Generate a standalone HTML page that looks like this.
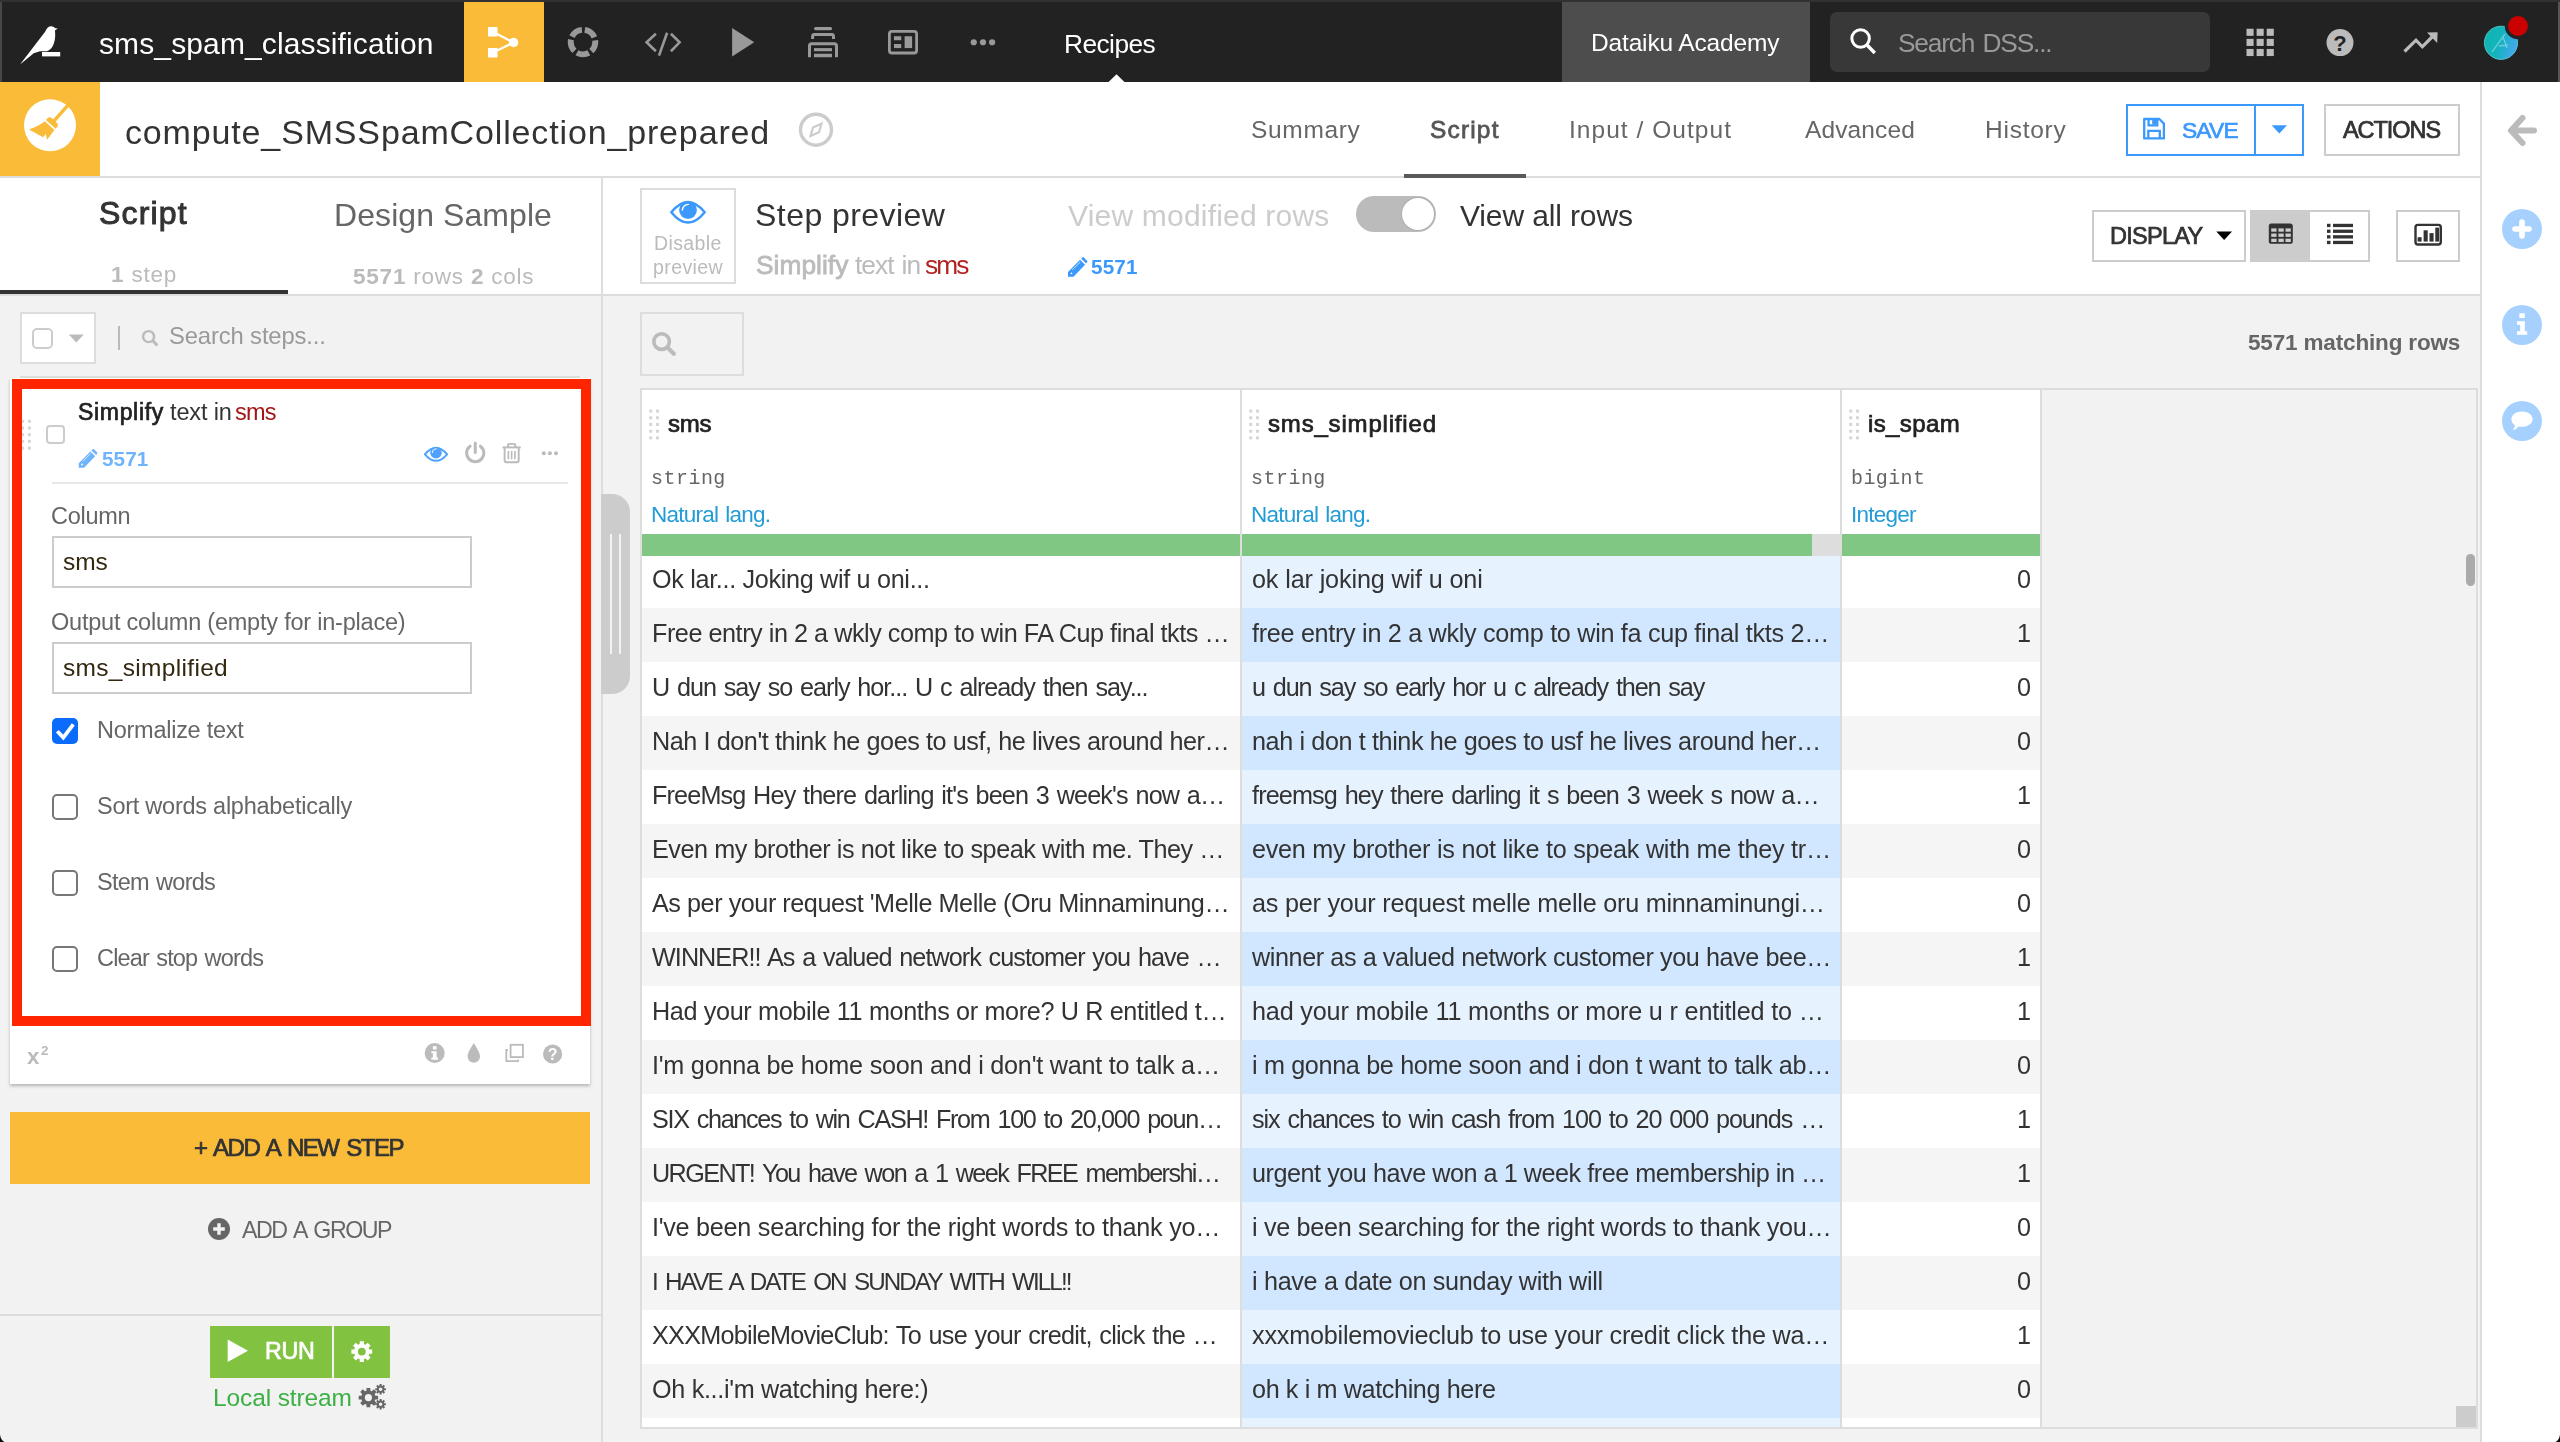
<!DOCTYPE html>
<html lang="en">
<head>
<meta charset="utf-8">
<title>compute_SMSSpamCollection_prepared - sms_spam_classification</title>
<style>
html,body{margin:0;padding:0;}
body{position:relative;width:2560px;height:1442px;overflow:hidden;background:#fff;font-family:"Liberation Sans",sans-serif;}
.b{position:absolute;box-sizing:border-box;}
svg{position:absolute;overflow:visible;}
.t{will-change:transform;position:absolute;white-space:pre;line-height:1;font-family:"Liberation Sans", sans-serif;}.m{font-family:"Liberation Mono", monospace;}
</style>
</head>
<body>

<!-- ===================== TOP NAVIGATION ===================== -->
<nav>
<div class="b" style="left:0;top:0;width:2560px;height:82px;background:#222"></div>
<div class="b" style="left:0;top:0;width:2560px;height:2px;background:#313131"></div>
<div class="b" style="left:0;top:2px;width:2px;height:80px;background:#474747"></div>
<div class="b" style="left:2558px;top:2px;width:2px;height:80px;background:#555"></div>
<div class="b" style="left:464px;top:2px;width:80px;height:80px;background:#f9bb38"></div>
<div class="b" style="left:1562px;top:2px;width:248px;height:80px;background:#4d4d4d"></div>
<div class="b" style="left:1830px;top:12px;width:380px;height:60px;background:#383838;border-radius:7px"></div>
<svg style="left:0;top:0" width="2560" height="1442" viewBox="0 0 2560 1442">

<g fill="#fff"><path d="M57.8 28.4L54.9 30.6C55.6 36 55.2 42 52.5 46.5C51 49 49 50.5 47 51.2L40 51.3 33.7 53.2 20 64.6 45.3 31.5C46.5 28 49 26.2 51 26.2C53 26.2 54.5 27.2 55.3 28.3Z"/><rect x="42" y="52" width="18.2" height="4.4"/></g>
<g fill="#fff" stroke="#fff" stroke-width="2.2"><rect x="488" y="27" width="9.5" height="9.5" stroke="none"/><rect x="488" y="48" width="9.5" height="9.5" stroke="none"/><circle cx="513.6" cy="42.5" r="4.7" stroke="none"/><path d="M492.7 31.75L513.6 42.5 492.7 52.75" fill="none"/></g>
<circle cx="583" cy="42.1" r="12.3" fill="none" stroke="#999" stroke-width="5.9" stroke-dasharray="12.4 3.057" stroke-dashoffset="2.34"/>
<g fill="none" stroke="#999" stroke-width="2.6"><path d="M655.9 33.75L646.6 42.3 655.9 51.25"/><path d="M667.1 32.75L659 55.6"/><path d="M670.9 33.75L679.6 42.3 670.9 51.25"/></g>
<path d="M732.1 28.1L754.25 42.25 732.1 56.5Z" fill="#999"/>
<g fill="#999" stroke="#999" stroke-width="3"><rect x="814" y="26.9" width="18.1" height="3.3" rx="1.6" stroke="none"/><path d="M812.6 39V36.5Q812.6 34.6 814.5 34.6H831.6Q833.5 34.6 833.5 36.5V39" fill="none"/><path d="M809.5 57.25V46Q809.5 43.75 811.7 43.75H834.3Q836.5 43.75 836.5 46V57.25" fill="none"/><rect x="814" y="48.1" width="18" height="3.15" stroke="none"/><rect x="814" y="53.75" width="18" height="3.5" stroke="none"/></g>
<g fill="#999"><rect x="889.4" y="31.4" width="27.2" height="21.6" rx="2.5" fill="none" stroke="#999" stroke-width="2.8"/><rect x="894" y="36.25" width="7.25" height="4"/><rect x="894" y="44" width="7.25" height="4.1"/><rect x="904.6" y="36.25" width="7.5" height="11.85"/></g>
<g fill="#999"><circle cx="973.75" cy="42.25" r="3.1"/><circle cx="983" cy="42.25" r="3.1"/><circle cx="992.1" cy="42.25" r="3.1"/></g>
<path d="M1108.5 82L1116.5 74.2 1124.5 82Z" fill="#fff"/>
<g fill="none" stroke="#fff" stroke-width="3"><circle cx="1860.6" cy="38.5" r="8.75"/><path d="M1867 45L1874.8 53" stroke-width="3.4"/></g>
<g fill="#bbb"><rect x="2246.5" y="28.75" width="7.1" height="7.1"/><rect x="2256.6" y="28.75" width="7.1" height="7.1"/><rect x="2266.7" y="28.75" width="7.1" height="7.1"/><rect x="2246.5" y="38.85" width="7.1" height="7.1"/><rect x="2256.6" y="38.85" width="7.1" height="7.1"/><rect x="2266.7" y="38.85" width="7.1" height="7.1"/><rect x="2246.5" y="48.95" width="7.1" height="7.1"/><rect x="2256.6" y="48.95" width="7.1" height="7.1"/><rect x="2266.7" y="48.95" width="7.1" height="7.1"/></g>
<circle cx="2340" cy="42.6" r="13.5" fill="#bbb"/>
<text x="2340" y="50.6" text-anchor="middle" font-family="Liberation Sans, sans-serif" font-weight="700" font-size="22" fill="#222">?</text>
<g fill="#bbb"><path d="M2404.5 51.5L2416 40.2 2422.3 46.8 2433 36" fill="none" stroke="#bbb" stroke-width="3.2"/><path d="M2427 32.6L2437.6 32.3 2437.2 42.9Z"/></g>
<defs><linearGradient id="av" x1="0" y1="0" x2="1" y2="0.3"><stop offset="0" stop-color="#0db6ad"/><stop offset=".55" stop-color="#14b3bd"/><stop offset="1" stop-color="#3fa9ea"/></linearGradient></defs>
<circle cx="2501" cy="42.8" r="16.6" fill="url(#av)" stroke="#5fd0d6" stroke-width=".8"/>
<path d="M2492 52L2505 34M2499 46L2508 45M2503 37L2507 48" stroke="#fff" stroke-opacity=".35" stroke-width="1.3" fill="none"/>
<circle cx="2518" cy="26" r="13.2" fill="#222"/><circle cx="2518" cy="26" r="10" fill="#cb0000"/>

</svg>
<span class="t" style="top:29.40px;font-size:30px;letter-spacing:0.123px;left:99.00px;"><span style="color:#fff;">sms_spam_classification</span></span>
<span class="t" style="top:30.70px;font-size:26.3px;letter-spacing:-0.555px;left:1064.10px;"><span style="color:#fff;">Recipes</span></span>
<span class="t" style="top:30.80px;font-size:24.5px;letter-spacing:-0.161px;left:1591.10px;"><span style="color:#fff;">Dataiku Academy</span></span>
<span class="t" style="top:30.20px;font-size:26.3px;letter-spacing:-1.181px;word-spacing:2.13px;left:1897.53px;"><span style="color:#999;">Search DSS...</span></span>
</nav>

<!-- ===================== RECIPE HEADER ===================== -->
<header>
<div class="b" style="left:0;top:82px;width:2482px;height:94px;background:#fff"></div>
<div class="b" style="left:0;top:176px;width:2482px;height:2px;background:#ddd"></div>
<div class="b" style="left:0;top:82px;width:100px;height:94px;background:#f9bb38"></div>
<div class="b" style="left:1404px;top:174px;width:122px;height:4px;background:#5a5a5a"></div>
<div class="b" style="left:2126px;top:104px;width:178px;height:52px;border:2px solid #3b99fc;background:#fff"></div>
<div class="b" style="left:2254px;top:104px;width:2px;height:52px;background:#3b99fc"></div>
<div class="b" style="left:2324px;top:104px;width:136px;height:52px;border:2px solid #ccc;background:#fff"></div>
<svg style="left:0;top:0" width="2560" height="1442" viewBox="0 0 2560 1442">

<circle cx="50" cy="125.25" r="26" fill="#fff"/>
<g transform="translate(50 125.25) rotate(42)" fill="#f9bb38"><rect x="-1.7" y="-27" width="3.4" height="23"/><path d="M-6.5 -1.2V-3.2Q-6.5 -6.4 -3.3 -6.4H3.3Q6.5 -6.4 6.5 -3.2V-1.2Z"/><path d="M-6.5 .6H6.5L7.6 12.8 2.7 9.4 2.9 13.6 -12.7 17.2C-9.5 11.5 -7.3 6 -6.5 .6Z"/></g>
<g fill="none" stroke="#ccc"><circle cx="816" cy="129.7" r="15.5" stroke-width="3.4"/><path d="M810.5 136L813 127.5 821.5 123.8 819 132.3Z" stroke-width="2.2"/></g>
<g fill="none" stroke="#3b99fc" stroke-width="2.3"><path d="M2144.2 119H2159.3L2163.9 123.6V138.4H2144.2Z" stroke-linejoin="round"/><path d="M2148.3 138V130.8H2159.8V138"/><path d="M2148.6 119.3V125.3H2157.3V119.3"/><rect x="2152.2" y="119.5" width="4.3" height="5" fill="#3b99fc" stroke="none"/></g>
<path d="M2271.6 125.2H2287L2279.3 133.6Z" fill="#3b99fc"/>

</svg>
<span class="t" style="top:115.00px;font-size:34px;letter-spacing:0.852px;left:124.53px;"><span style="color:#333;">compute_SMSSpamCollection_prepared</span></span>
<span class="t" style="top:118.30px;font-size:24.5px;letter-spacing:0.675px;left:1250.99px;"><span style="color:#666;">Summary</span></span>
<span class="t" style="top:118.30px;font-size:24.5px;letter-spacing:1.170px;left:1430.47px;"><span style="color:#555;-webkit-text-stroke:0.76px;">Script</span></span>
<span class="t" style="top:118.30px;font-size:24.5px;letter-spacing:1.038px;left:1569.10px;"><span style="color:#666;">Input / Output</span></span>
<span class="t" style="top:118.30px;font-size:24.5px;letter-spacing:0.129px;left:1804.85px;"><span style="color:#666;">Advanced</span></span>
<span class="t" style="top:118.30px;font-size:24.5px;letter-spacing:0.750px;left:1985.10px;"><span style="color:#666;">History</span></span>
<span class="t" style="top:119.00px;font-size:22.8px;letter-spacing:-0.840px;left:2181.97px;"><span style="color:#3b99fc;-webkit-text-stroke:0.71px;">SAVE</span></span>
<span class="t" style="top:119.00px;font-size:23.5px;letter-spacing:-1.050px;left:2342.90px;"><span style="color:#333;-webkit-text-stroke:0.73px;">ACTIONS</span></span>
</header>

<!-- ===================== LEFT PANEL : SCRIPT ===================== -->
<aside>
<div class="b" style="left:0;top:296px;width:601px;height:1146px;background:#f2f2f2"></div>
<div class="b" style="left:0;top:294px;width:601px;height:2px;background:#ddd"></div>
<div class="b" style="left:0;top:290px;width:288px;height:4px;background:#333"></div>
<span class="t" style="top:197.40px;font-size:32px;letter-spacing:1.170px;left:99.00px;"><span style="color:#333;-webkit-text-stroke:0.99px;">Script</span></span>
<span class="t" style="top:199.20px;font-size:32px;letter-spacing:0.075px;left:334.10px;"><span style="color:#666;">Design Sample</span></span>
<span class="t" style="top:264.00px;font-size:22.5px;letter-spacing:0.810px;left:111.00px;"><span style="color:#bbb;font-weight:700;">1</span><span style="color:#bbb;"> step</span></span>
<span class="t" style="top:265.80px;font-size:22.5px;letter-spacing:0.780px;left:353.00px;"><span style="color:#bbb;font-weight:700;">5571</span><span style="color:#bbb;"> rows </span><span style="color:#bbb;font-weight:700;">2</span><span style="color:#bbb;"> cols</span></span>
<div class="b" style="left:20px;top:312px;width:76px;height:52px;background:#fff;border:2px solid #ddd"></div>
<div class="b" style="left:32px;top:328px;width:21px;height:21px;background:#fff;border:2px solid #ccc;border-radius:5px"></div>
<div class="b" style="left:118px;top:326px;width:2px;height:24px;background:#bbb"></div>
<span class="t" style="top:323.80px;font-size:23.8px;letter-spacing:-0.129px;left:169.00px;"><span style="color:#999;">Search steps...</span></span>
<div class="b" style="left:20px;top:376px;width:560px;height:2px;background:#ddd"></div>

<section>
<div class="b" style="left:10px;top:378px;width:580px;height:706px;background:#fff;box-shadow:0 2px 3px rgba(0,0,0,.25)"></div>
<div class="b" style="left:46px;top:425px;width:19px;height:19px;background:#fff;border:2px solid #ccc;border-radius:4px"></div>
<div class="b" style="left:52px;top:482px;width:516px;height:2px;background:#e8e8e8"></div>
<div class="b" style="left:52px;top:536px;width:420px;height:52px;background:#fff;border:2px solid #ccc"></div>
<div class="b" style="left:52px;top:642px;width:420px;height:52px;background:#fff;border:2px solid #ccc"></div>
<div class="b" style="left:52px;top:718px;width:26px;height:26px;background:#0b6cfb;border-radius:5px"></div>
<div class="b" style="left:52px;top:794px;width:26px;height:26px;background:#fff;border:2px solid #777;border-radius:5px"></div>
<div class="b" style="left:52px;top:870px;width:26px;height:26px;background:#fff;border:2px solid #777;border-radius:5px"></div>
<div class="b" style="left:52px;top:946px;width:26px;height:26px;background:#fff;border:2px solid #777;border-radius:5px"></div>
<svg style="left:0;top:0" width="2560" height="1442" viewBox="0 0 2560 1442">

<path d="M68.75 334.5H83.75L76.25 342.5Z" fill="#bbb"/>
<g fill="none" stroke="#bbb" stroke-width="2.4"><circle cx="148.6" cy="336.6" r="5.5"/><path d="M152.8 340.8L157.3 345.4" stroke-width="3"/></g>
<g><rect x="21.1" y="419.80" width="3" height="3" fill="#d6d6d6"/><rect x="27.9" y="419.80" width="3" height="3" fill="#d6d6d6"/><rect x="21.1" y="426.50" width="3" height="3" fill="#d6d6d6"/><rect x="27.9" y="426.50" width="3" height="3" fill="#d6d6d6"/><rect x="21.1" y="433.20" width="3" height="3" fill="#d6d6d6"/><rect x="27.9" y="433.20" width="3" height="3" fill="#d6d6d6"/><rect x="21.1" y="439.90" width="3" height="3" fill="#d6d6d6"/><rect x="27.9" y="439.90" width="3" height="3" fill="#d6d6d6"/><rect x="21.1" y="446.60" width="3" height="3" fill="#d6d6d6"/><rect x="27.9" y="446.60" width="3" height="3" fill="#d6d6d6"/></g>
<g transform="translate(78.75 448.8) scale(1.0)"><path d="M0 14.4L11.7 2.7 16.4 7.4 5.3 19.06H0ZM12.7 1.7L14.1.3Q14.55-.1 15 .3L18.5 3.8Q18.9 4.3 18.5 4.8L17.4 6.3Z" fill="#6eb3fc"/><path d="M4.1 12.5L11.9 4.7" stroke="#fff" stroke-width=".8" stroke-opacity=".85"/><circle cx="3.3" cy="15.7" r=".9" fill="#fff"/></g>
<g stroke="#4fa3fd" fill="none" stroke-width="2"><path d="M424.9 454.3Q436 441.2 447.1 454.3Q436 467.4 424.9 454.3Z" stroke-linejoin="round"/><circle cx="436" cy="452.7" r="5.8" fill="#4fa3fd" stroke="none"/><path d="M432.3 452.6A3.9 3.9 0 0 1 436.2 448.9" stroke="#fff" stroke-width="1" stroke-linecap="round"/></g>
<g stroke="#bbb" fill="none" stroke-width="3" stroke-linecap="round"><path d="M470.1 446.2A8.6 8.6 0 1 0 480.4 446.2"/><path d="M475.25 443V452.5"/></g>
<g stroke="#bbb" fill="none" stroke-width="1.9"><path d="M502.5 447.4H520.75"/><path d="M508 447V445Q508 443.9 509.1 443.9H514.2Q515.3 443.9 515.3 445V447"/><path d="M504.6 448V460.3Q504.6 462.2 506.5 462.2H516.8Q518.7 462.2 518.7 460.3V448"/><path d="M508.4 451V459.3M511.65 451V459.3M514.9 451V459.3" stroke-width="1.6"/></g>
<g fill="#bbb"><circle cx="543.8" cy="453.3" r="2"/><circle cx="549.9" cy="453.3" r="2"/><circle cx="556" cy="453.3" r="2"/></g>
<path d="M57.3 731.3L63.3 737.6 73.3 724.3" fill="none" stroke="#fff" stroke-width="3.8"/>
<circle cx="434.7" cy="1053" r="10" fill="#bbb"/>
<path d="M432.9 1046.2H436.6V1049.5H432.9ZM431.4 1051.2H436.6V1057.6H438V1059.8H431.4V1057.6H432.9V1053.3H431.4Z" fill="#fff"/>
<path d="M473.8 1043C477 1048.5 480 1052.5 480 1056.5A6.2 6.2 0 0 1 467.6 1056.5C467.6 1052.5 470.6 1048.5 473.8 1043Z" fill="#bbb"/>
<g fill="none" stroke="#bbb" stroke-width="1.8"><rect x="510.6" y="1044.8" width="12.3" height="12.3"/><path d="M508 1049.8H506.3V1061.2H518V1059.5"/></g>
<circle cx="552.6" cy="1054" r="9.6" fill="#bbb"/>
<text x="552.6" y="1059.8" text-anchor="middle" font-family="Liberation Sans, sans-serif" font-weight="700" font-size="16" fill="#fff">?</text>

</svg>
<span class="t" style="top:400.90px;font-size:23.0px;letter-spacing:0.675px;left:78.05px;"><span style="color:#222;-webkit-text-stroke:0.71px;">Simplify</span></span>
<span class="t" style="top:400.90px;font-size:23.5px;letter-spacing:-0.150px;left:169.85px;"><span style="color:#333;">text in</span></span>
<span class="t" style="top:400.90px;font-size:23.5px;letter-spacing:-0.787px;left:234.53px;"><span style="color:#a51616;">sms</span></span>
<span class="t" style="top:449.00px;font-size:20.7px;letter-spacing:0.090px;left:102.01px;"><span style="color:#6eb3fc;font-weight:700;">5571</span></span>
<span class="t" style="top:504.90px;font-size:23.5px;letter-spacing:-0.270px;left:51.05px;"><span style="color:#666;">Column</span></span>
<span class="t" style="top:549.80px;font-size:24.5px;letter-spacing:-0.113px;left:63.48px;"><span style="color:#33270f;">sms</span></span>
<span class="t" style="top:610.90px;font-size:23.5px;letter-spacing:-0.218px;left:51.05px;"><span style="color:#666;">Output column (empty for in-place)</span></span>
<span class="t" style="top:655.80px;font-size:24.5px;letter-spacing:0.312px;left:63.48px;"><span style="color:#33270f;">sms_simplified</span></span>
<span class="t" style="top:719.00px;font-size:23.5px;letter-spacing:-0.260px;left:96.57px;"><span style="color:#666;">Normalize text</span></span>
<span class="t" style="top:795.00px;font-size:23.5px;letter-spacing:-0.253px;left:97.47px;"><span style="color:#666;">Sort words alphabetically</span></span>
<span class="t" style="top:871.00px;font-size:23.5px;letter-spacing:-0.725px;word-spacing:1.31px;left:97.47px;"><span style="color:#666;">Stem words</span></span>
<span class="t" style="top:947.00px;font-size:23.5px;letter-spacing:-0.825px;word-spacing:1.48px;left:97.47px;"><span style="color:#666;">Clear stop words</span></span>
<span class="t" style="top:1046.00px;font-size:22.3px;left:26.70px;"><span style="color:#bbb;font-weight:700;">x</span></span>
<span class="t" style="top:1044.00px;font-size:13.5px;left:41.30px;"><span style="color:#bbb;font-weight:700;">2</span></span>
<div class="b" style="left:12px;top:379px;width:579px;height:647px;border:10px solid #fe2500"></div>
</section>

<div class="b" style="left:10px;top:1112px;width:580px;height:72px;background:#f9bb38"></div>
<div class="b" style="left:0;top:1314px;width:601px;height:2px;background:#ddd"></div>
<div class="b" style="left:210px;top:1326px;width:122px;height:52px;background:#81c241"></div>
<div class="b" style="left:334px;top:1326px;width:56px;height:52px;background:#81c241"></div>
<svg style="left:0;top:0" width="2560" height="1442" viewBox="0 0 2560 1442">

<circle cx="219" cy="1229" r="11" fill="#666"/><path d="M213.2 1229H224.8M219 1223.2V1234.8" stroke="#f2f2f2" stroke-width="3.4"/>
<path d="M227.7 1339.6L248 1350.8 227.7 1362Z" fill="#fff"/>
<path d="M369.31 1349.48L372.20 1349.53L372.20 1353.67L369.31 1353.72L368.61 1355.41L370.61 1357.49L367.69 1360.41L365.61 1358.41L363.92 1359.11L363.87 1362.00L359.73 1362.00L359.68 1359.11L357.99 1358.41L355.91 1360.41L352.99 1357.49L354.99 1355.41L354.29 1353.72L351.40 1353.67L351.40 1349.53L354.29 1349.48L354.99 1347.79L352.99 1345.71L355.91 1342.79L357.99 1344.79L359.68 1344.09L359.73 1341.20L363.87 1341.20L363.92 1344.09L365.61 1344.79L367.69 1342.79L370.61 1345.71L368.61 1347.79ZM365.70 1351.60A3.9 3.9 0 1 0 357.90 1351.60A3.9 3.9 0 1 0 365.70 1351.60Z" fill="#fff" fill-rule="evenodd"/>
<g fill="#666" fill-rule="evenodd"><path d="M375.33 1395.65L378.11 1395.67L378.11 1399.53L375.33 1399.55L374.68 1401.12L376.63 1403.10L373.90 1405.83L371.92 1403.88L370.35 1404.53L370.33 1407.31L366.47 1407.31L366.45 1404.53L364.88 1403.88L362.90 1405.83L360.17 1403.10L362.12 1401.12L361.47 1399.55L358.69 1399.53L358.69 1395.67L361.47 1395.65L362.12 1394.08L360.17 1392.10L362.90 1389.37L364.88 1391.32L366.45 1390.67L366.47 1387.89L370.33 1387.89L370.35 1390.67L371.92 1391.32L373.90 1389.37L376.63 1392.10L374.68 1394.08ZM372.00 1397.60A3.6 3.6 0 1 0 364.80 1397.60A3.6 3.6 0 1 0 372.00 1397.60Z"/><path d="M384.26 1388.17L385.90 1388.15L385.90 1390.25L384.26 1390.23L383.92 1391.06L385.09 1392.20L383.60 1393.69L382.46 1392.52L381.63 1392.86L381.65 1394.50L379.55 1394.50L379.57 1392.86L378.74 1392.52L377.60 1393.69L376.11 1392.20L377.28 1391.06L376.94 1390.23L375.30 1390.25L375.30 1388.15L376.94 1388.17L377.28 1387.34L376.11 1386.20L377.60 1384.71L378.74 1385.88L379.57 1385.54L379.55 1383.90L381.65 1383.90L381.63 1385.54L382.46 1385.88L383.60 1384.71L385.09 1386.20L383.92 1387.34ZM382.40 1389.20A1.8 1.8 0 1 0 378.80 1389.20A1.8 1.8 0 1 0 382.40 1389.20Z"/><path d="M384.26 1403.17L385.90 1403.15L385.90 1405.25L384.26 1405.23L383.92 1406.06L385.09 1407.20L383.60 1408.69L382.46 1407.52L381.63 1407.86L381.65 1409.50L379.55 1409.50L379.57 1407.86L378.74 1407.52L377.60 1408.69L376.11 1407.20L377.28 1406.06L376.94 1405.23L375.30 1405.25L375.30 1403.15L376.94 1403.17L377.28 1402.34L376.11 1401.20L377.60 1399.71L378.74 1400.88L379.57 1400.54L379.55 1398.90L381.65 1398.90L381.63 1400.54L382.46 1400.88L383.60 1399.71L385.09 1401.20L383.92 1402.34ZM382.40 1404.20A1.8 1.8 0 1 0 378.80 1404.20A1.8 1.8 0 1 0 382.40 1404.20Z"/></g>

</svg>
<span class="t" style="top:1135.80px;font-size:24px;letter-spacing:-1.476px;word-spacing:2.66px;left:194.00px;"><span style="color:#333;-webkit-text-stroke:0.74px;">+ ADD A NEW STEP</span></span>
<span class="t" style="top:1219.20px;font-size:23.2px;letter-spacing:-1.440px;word-spacing:2.59px;left:241.90px;"><span style="color:#666;">ADD A GROUP</span></span>
<span class="t" style="top:1340.20px;font-size:23.2px;letter-spacing:-0.270px;left:265.00px;"><span style="color:#fff;-webkit-text-stroke:0.72px;">RUN</span></span>
<span class="t" style="top:1386.20px;font-size:24.5px;letter-spacing:-0.123px;left:213.15px;"><span style="color:#3cb043;">Local stream</span></span>
</aside>

<!-- panel divider + collapse handle -->
<div class="b" style="left:601px;top:178px;width:2px;height:1264px;background:#ddd"></div>
<div class="b" style="left:603px;top:296px;width:1877px;height:1146px;background:#f2f2f2"></div>
<div class="b" style="left:601px;top:494px;width:29px;height:200px;background:#ccc;border-radius:0 18px 18px 0"></div>
<div class="b" style="left:610px;top:534px;width:2px;height:120px;background:#f2f2f2"></div>
<div class="b" style="left:619px;top:534px;width:2px;height:120px;background:#f2f2f2"></div>

<!-- ===================== MAIN : STEP PREVIEW ===================== -->
<main>
<div class="b" style="left:603px;top:294px;width:1877px;height:2px;background:#ddd"></div>
<div class="b" style="left:640px;top:188px;width:96px;height:96px;background:#fff;border:2px solid #ddd"></div>
<div class="b" style="left:1356px;top:196px;width:80px;height:36px;background:#bbb;border-radius:18px"></div>
<div class="b" style="left:1402px;top:198px;width:32px;height:32px;background:#fff;border-radius:16px;box-shadow:0 0 0 1px #b3adad"></div>
<div class="b" style="left:2092px;top:210px;width:154px;height:52px;background:#fff;border:2px solid #ccc"></div>
<div class="b" style="left:2250px;top:210px;width:120px;height:52px;background:#fff;border:2px solid #ccc"></div>
<div class="b" style="left:2250px;top:210px;width:60px;height:52px;background:#ccc"></div>
<div class="b" style="left:2396px;top:210px;width:64px;height:52px;background:#fff;border:2px solid #ccc"></div>
<svg style="left:0;top:0" width="2560" height="1442" viewBox="0 0 2560 1442">

<g stroke="#3b99fc" fill="none" stroke-width="2.5"><path d="M671.3 212.2Q688 191.6 704.7 212.2Q688 233 671.3 212.2Z" stroke-linejoin="round"/><circle cx="688" cy="209.9" r="8.9" fill="#3b99fc" stroke="none"/><path d="M682.4 210.2A5.9 5.9 0 0 1 688.4 204.3" stroke="#fff" stroke-width="1.3" stroke-linecap="round"/></g>
<g transform="translate(1068 257) scale(1.04)"><path d="M0 14.4L11.7 2.7 16.4 7.4 5.3 19.06H0ZM12.7 1.7L14.1.3Q14.55-.1 15 .3L18.5 3.8Q18.9 4.3 18.5 4.8L17.4 6.3Z" fill="#3b99fc"/><path d="M4.1 12.5L11.9 4.7" stroke="#fff" stroke-width=".8" stroke-opacity=".85"/><circle cx="3.3" cy="15.7" r=".9" fill="#fff"/></g>
<path d="M2216.3 231.6H2232L2224.15 240Z" fill="#000"/>
<rect x="2268.8" y="223.4" width="24" height="20.4" rx="2.6" fill="#333"/>
<g fill="#ccc"><rect x="2271.25" y="228.4" width="5.3" height="3.3"/><rect x="2278.45" y="228.4" width="5.3" height="3.3"/><rect x="2285.5" y="228.4" width="5.3" height="3.3"/><rect x="2271.25" y="233.55" width="5.3" height="3.3"/><rect x="2278.45" y="233.55" width="5.3" height="3.3"/><rect x="2285.5" y="233.55" width="5.3" height="3.3"/><rect x="2271.25" y="238.7" width="5.3" height="3.3"/><rect x="2278.45" y="238.7" width="5.3" height="3.3"/><rect x="2285.5" y="238.7" width="5.3" height="3.3"/></g>
<g fill="#333"><rect x="2327" y="223.8" width="3.5" height="3.3"/><rect x="2333" y="223.8" width="20" height="3.3"/><rect x="2327" y="229.6" width="3.5" height="3.3"/><rect x="2333" y="229.6" width="20" height="3.3"/><rect x="2327" y="235.2" width="3.5" height="3.3"/><rect x="2333" y="235.2" width="20" height="3.3"/><rect x="2327" y="240.8" width="3.5" height="3.3"/><rect x="2333" y="240.8" width="20" height="3.3"/></g>
<rect x="2415.5" y="224.9" width="25.3" height="19.6" rx="2.4" fill="none" stroke="#333" stroke-width="2.4"/>
<g fill="#333"><rect x="2417.6" y="237.2" width="4" height="4.4"/><rect x="2423.6" y="230.3" width="4.1" height="11.3"/><rect x="2429.5" y="233.1" width="4.1" height="8.5"/><rect x="2435.3" y="227.6" width="3.8" height="14"/></g>

</svg>
<span class="t" style="top:233.90px;font-size:19.5px;letter-spacing:0.375px;left:654.05px;"><span style="color:#bbb;">Disable</span></span>
<span class="t" style="top:257.80px;font-size:19.5px;letter-spacing:0.413px;left:652.52px;"><span style="color:#bbb;">preview</span></span>
<span class="t" style="top:199.20px;font-size:32px;letter-spacing:0.450px;left:755.10px;"><span style="color:#333;">Step preview</span></span>
<span class="t" style="top:252.00px;font-size:26.3px;letter-spacing:0.032px;left:755.52px;"><span style="color:#bbb;-webkit-text-stroke:0.82px;">Simplify</span></span>
<span class="t" style="top:252.00px;font-size:26.3px;letter-spacing:-0.975px;word-spacing:1.76px;left:854.85px;"><span style="color:#bbb;">text in</span></span>
<span class="t" style="top:252.00px;font-size:26.3px;letter-spacing:-1.913px;left:925.00px;"><span style="color:#b22222;">sms</span></span>
<span class="t" style="top:201.20px;font-size:30px;letter-spacing:0.199px;left:1068.43px;"><span style="color:#ccc;">View modified rows</span></span>
<span class="t" style="top:257.00px;font-size:20.7px;letter-spacing:0.150px;left:1091.05px;"><span style="color:#3b99fc;font-weight:700;">5571</span></span>
<span class="t" style="top:201.20px;font-size:30px;letter-spacing:-0.131px;left:1460.43px;"><span style="color:#333;">View all rows</span></span>
<span class="t" style="top:225.20px;font-size:23.5px;letter-spacing:-0.735px;left:2110.05px;"><span style="color:#333;-webkit-text-stroke:0.73px;">DISPLAY</span></span>

<div class="b" style="left:640px;top:312px;width:104px;height:64px;border:2px solid #ddd"></div>
<span class="t" style="top:332.20px;font-size:22.5px;letter-spacing:-0.161px;left:2247.53px;"><span style="color:#666;font-weight:700;">5571 matching rows</span></span>

<!-- table -->
<div class="b" style="left:640px;top:388px;width:1838px;height:1041px;border:2px solid #ddd"></div>
<div class="b" style="left:642px;top:390px;width:598px;height:145px;background:#fff"></div>
<div class="b" style="left:1242px;top:390px;width:598px;height:145px;background:#fff"></div>
<div class="b" style="left:1842px;top:390px;width:198px;height:145px;background:#fff"></div>
<div class="b" style="left:642px;top:534px;width:598px;height:22px;background:#81c784"></div>
<div class="b" style="left:1242px;top:534px;width:570px;height:22px;background:#81c784"></div>
<div class="b" style="left:1812px;top:534px;width:28px;height:22px;background:#ddd"></div>
<div class="b" style="left:1842px;top:534px;width:198px;height:22px;background:#81c784"></div>
<span class="t" style="top:412.00px;font-size:24px;letter-spacing:-0.225px;left:667.93px;"><span style="color:#222;-webkit-text-stroke:0.74px;">sms</span></span>
<span class="t" style="top:412.00px;font-size:24px;letter-spacing:0.817px;left:1267.93px;"><span style="color:#222;-webkit-text-stroke:0.74px;">sms_simplified</span></span>
<span class="t" style="top:412.00px;font-size:24px;letter-spacing:0.375px;left:1867.99px;"><span style="color:#222;-webkit-text-stroke:0.74px;">is_spam</span></span>
<span class="t m" style="top:468.90px;font-size:20px;letter-spacing:0.468px;left:651.11px;"><span style="color:#666;">string</span></span>
<span class="t m" style="top:468.90px;font-size:20px;letter-spacing:0.468px;left:1251.11px;"><span style="color:#666;">string</span></span>
<span class="t m" style="top:468.90px;font-size:20px;letter-spacing:0.378px;left:1851.11px;"><span style="color:#666;">bigint</span></span>
<span class="t" style="top:504.40px;font-size:22.5px;letter-spacing:-0.750px;word-spacing:1.35px;left:651.11px;"><span style="color:#239cd6;">Natural lang.</span></span>
<span class="t" style="top:504.40px;font-size:22.5px;letter-spacing:-0.750px;word-spacing:1.35px;left:1251.11px;"><span style="color:#239cd6;">Natural lang.</span></span>
<span class="t" style="top:504.40px;font-size:22.5px;letter-spacing:-0.765px;left:1851.16px;"><span style="color:#239cd6;">Integer</span></span>
<div class="tr"><div class="b" style="left:642px;top:556px;width:598px;height:52px;background:#fff"></div><div class="b" style="left:1242px;top:556px;width:598px;height:52px;background:#e7f2ff"></div><div class="b" style="left:1842px;top:556px;width:198px;height:52px;background:#fff"></div><span class="t" style="top:567.00px;font-size:25.2px;letter-spacing:-0.321px;left:651.60px;"><span style="color:#333;">Ok lar... Joking wif u oni...</span></span>
<span class="t" style="top:567.00px;font-size:25.2px;letter-spacing:-0.135px;left:1251.60px;"><span style="color:#333;">ok lar joking wif u oni</span></span>
<span class="t" style="top:567.00px;font-size:25.2px;right:529.30px;"><span style="color:#333;">0</span></span></div>
<div class="tr"><div class="b" style="left:642px;top:608px;width:598px;height:54px;background:#f5f5f5"></div><div class="b" style="left:1242px;top:608px;width:598px;height:54px;background:#d1e7ff"></div><div class="b" style="left:1842px;top:608px;width:198px;height:54px;background:#f5f5f5"></div><span class="t" style="top:621.00px;font-size:25.2px;letter-spacing:-0.458px;left:651.60px;"><span style="color:#333;">Free entry in 2 a wkly comp to win FA Cup final tkts …</span></span>
<span class="t" style="top:621.00px;font-size:25.2px;letter-spacing:-0.300px;left:1251.60px;"><span style="color:#333;">free entry in 2 a wkly comp to win fa cup final tkts 2…</span></span>
<span class="t" style="top:621.00px;font-size:25.2px;right:529.30px;"><span style="color:#333;">1</span></span></div>
<div class="tr"><div class="b" style="left:642px;top:662px;width:598px;height:54px;background:#fff"></div><div class="b" style="left:1242px;top:662px;width:598px;height:54px;background:#e7f2ff"></div><div class="b" style="left:1842px;top:662px;width:198px;height:54px;background:#fff"></div><span class="t" style="top:675.00px;font-size:25.2px;letter-spacing:-1.026px;word-spacing:1.85px;left:651.60px;"><span style="color:#333;">U dun say so early hor... U c already then say...</span></span>
<span class="t" style="top:675.00px;font-size:25.2px;letter-spacing:-1.123px;word-spacing:2.02px;left:1251.60px;"><span style="color:#333;">u dun say so early hor u c already then say</span></span>
<span class="t" style="top:675.00px;font-size:25.2px;right:529.30px;"><span style="color:#333;">0</span></span></div>
<div class="tr"><div class="b" style="left:642px;top:716px;width:598px;height:54px;background:#f5f5f5"></div><div class="b" style="left:1242px;top:716px;width:598px;height:54px;background:#d1e7ff"></div><div class="b" style="left:1842px;top:716px;width:198px;height:54px;background:#f5f5f5"></div><span class="t" style="top:729.00px;font-size:25.2px;letter-spacing:-0.418px;left:651.60px;"><span style="color:#333;">Nah I don&#x27;t think he goes to usf, he lives around her…</span></span>
<span class="t" style="top:729.00px;font-size:25.2px;letter-spacing:-0.391px;left:1251.60px;"><span style="color:#333;">nah i don t think he goes to usf he lives around her…</span></span>
<span class="t" style="top:729.00px;font-size:25.2px;right:529.30px;"><span style="color:#333;">0</span></span></div>
<div class="tr"><div class="b" style="left:642px;top:770px;width:598px;height:54px;background:#fff"></div><div class="b" style="left:1242px;top:770px;width:598px;height:54px;background:#e7f2ff"></div><div class="b" style="left:1842px;top:770px;width:198px;height:54px;background:#fff"></div><span class="t" style="top:783.00px;font-size:25.2px;letter-spacing:-0.846px;word-spacing:1.52px;left:651.60px;"><span style="color:#333;">FreeMsg Hey there darling it&#x27;s been 3 week&#x27;s now a…</span></span>
<span class="t" style="top:783.00px;font-size:25.2px;letter-spacing:-0.864px;word-spacing:1.56px;left:1251.60px;"><span style="color:#333;">freemsg hey there darling it s been 3 week s now a…</span></span>
<span class="t" style="top:783.00px;font-size:25.2px;right:529.30px;"><span style="color:#333;">1</span></span></div>
<div class="tr"><div class="b" style="left:642px;top:824px;width:598px;height:54px;background:#f5f5f5"></div><div class="b" style="left:1242px;top:824px;width:598px;height:54px;background:#d1e7ff"></div><div class="b" style="left:1842px;top:824px;width:198px;height:54px;background:#f5f5f5"></div><span class="t" style="top:837.00px;font-size:25.2px;letter-spacing:-0.432px;left:651.60px;"><span style="color:#333;">Even my brother is not like to speak with me. They …</span></span>
<span class="t" style="top:837.00px;font-size:25.2px;letter-spacing:-0.251px;left:1251.60px;"><span style="color:#333;">even my brother is not like to speak with me they tr…</span></span>
<span class="t" style="top:837.00px;font-size:25.2px;right:529.30px;"><span style="color:#333;">0</span></span></div>
<div class="tr"><div class="b" style="left:642px;top:878px;width:598px;height:54px;background:#fff"></div><div class="b" style="left:1242px;top:878px;width:598px;height:54px;background:#e7f2ff"></div><div class="b" style="left:1842px;top:878px;width:198px;height:54px;background:#fff"></div><span class="t" style="top:891.00px;font-size:25.2px;letter-spacing:-0.452px;left:651.60px;"><span style="color:#333;">As per your request &#x27;Melle Melle (Oru Minnaminung…</span></span>
<span class="t" style="top:891.00px;font-size:25.2px;letter-spacing:-0.225px;left:1251.60px;"><span style="color:#333;">as per your request melle melle oru minnaminungi…</span></span>
<span class="t" style="top:891.00px;font-size:25.2px;right:529.30px;"><span style="color:#333;">0</span></span></div>
<div class="tr"><div class="b" style="left:642px;top:932px;width:598px;height:54px;background:#f5f5f5"></div><div class="b" style="left:1242px;top:932px;width:598px;height:54px;background:#d1e7ff"></div><div class="b" style="left:1842px;top:932px;width:198px;height:54px;background:#f5f5f5"></div><span class="t" style="top:945.00px;font-size:25.2px;letter-spacing:-0.948px;word-spacing:1.71px;left:651.60px;"><span style="color:#333;">WINNER!! As a valued network customer you have …</span></span>
<span class="t" style="top:945.00px;font-size:25.2px;letter-spacing:-0.412px;left:1251.60px;"><span style="color:#333;">winner as a valued network customer you have bee…</span></span>
<span class="t" style="top:945.00px;font-size:25.2px;right:529.30px;"><span style="color:#333;">1</span></span></div>
<div class="tr"><div class="b" style="left:642px;top:986px;width:598px;height:54px;background:#fff"></div><div class="b" style="left:1242px;top:986px;width:598px;height:54px;background:#e7f2ff"></div><div class="b" style="left:1842px;top:986px;width:198px;height:54px;background:#fff"></div><span class="t" style="top:999.00px;font-size:25.2px;letter-spacing:-0.349px;left:651.60px;"><span style="color:#333;">Had your mobile 11 months or more? U R entitled t…</span></span>
<span class="t" style="top:999.00px;font-size:25.2px;letter-spacing:-0.173px;left:1251.60px;"><span style="color:#333;">had your mobile 11 months or more u r entitled to …</span></span>
<span class="t" style="top:999.00px;font-size:25.2px;right:529.30px;"><span style="color:#333;">1</span></span></div>
<div class="tr"><div class="b" style="left:642px;top:1040px;width:598px;height:54px;background:#f5f5f5"></div><div class="b" style="left:1242px;top:1040px;width:598px;height:54px;background:#d1e7ff"></div><div class="b" style="left:1842px;top:1040px;width:198px;height:54px;background:#f5f5f5"></div><span class="t" style="top:1053.00px;font-size:25.2px;letter-spacing:-0.233px;left:651.60px;"><span style="color:#333;">I&#x27;m gonna be home soon and i don&#x27;t want to talk a…</span></span>
<span class="t" style="top:1053.00px;font-size:25.2px;letter-spacing:-0.342px;left:1251.60px;"><span style="color:#333;">i m gonna be home soon and i don t want to talk ab…</span></span>
<span class="t" style="top:1053.00px;font-size:25.2px;right:529.30px;"><span style="color:#333;">0</span></span></div>
<div class="tr"><div class="b" style="left:642px;top:1094px;width:598px;height:54px;background:#fff"></div><div class="b" style="left:1242px;top:1094px;width:598px;height:54px;background:#e7f2ff"></div><div class="b" style="left:1842px;top:1094px;width:198px;height:54px;background:#fff"></div><span class="t" style="top:1107.00px;font-size:25.2px;letter-spacing:-1.326px;word-spacing:2.39px;left:651.60px;"><span style="color:#333;">SIX chances to win CASH! From 100 to 20,000 poun…</span></span>
<span class="t" style="top:1107.00px;font-size:25.2px;letter-spacing:-1.044px;word-spacing:1.88px;left:1251.60px;"><span style="color:#333;">six chances to win cash from 100 to 20 000 pounds …</span></span>
<span class="t" style="top:1107.00px;font-size:25.2px;right:529.30px;"><span style="color:#333;">1</span></span></div>
<div class="tr"><div class="b" style="left:642px;top:1148px;width:598px;height:54px;background:#f5f5f5"></div><div class="b" style="left:1242px;top:1148px;width:598px;height:54px;background:#d1e7ff"></div><div class="b" style="left:1842px;top:1148px;width:198px;height:54px;background:#f5f5f5"></div><span class="t" style="top:1161.00px;font-size:25.2px;letter-spacing:-1.587px;word-spacing:2.86px;left:651.60px;"><span style="color:#333;">URGENT! You have won a 1 week FREE membershi…</span></span>
<span class="t" style="top:1161.00px;font-size:25.2px;letter-spacing:-0.463px;left:1251.60px;"><span style="color:#333;">urgent you have won a 1 week free membership in …</span></span>
<span class="t" style="top:1161.00px;font-size:25.2px;right:529.30px;"><span style="color:#333;">1</span></span></div>
<div class="tr"><div class="b" style="left:642px;top:1202px;width:598px;height:54px;background:#fff"></div><div class="b" style="left:1242px;top:1202px;width:598px;height:54px;background:#e7f2ff"></div><div class="b" style="left:1842px;top:1202px;width:198px;height:54px;background:#fff"></div><span class="t" style="top:1215.00px;font-size:25.2px;letter-spacing:-0.259px;left:651.60px;"><span style="color:#333;">I&#x27;ve been searching for the right words to thank yo…</span></span>
<span class="t" style="top:1215.00px;font-size:25.2px;letter-spacing:-0.324px;left:1251.60px;"><span style="color:#333;">i ve been searching for the right words to thank you…</span></span>
<span class="t" style="top:1215.00px;font-size:25.2px;right:529.30px;"><span style="color:#333;">0</span></span></div>
<div class="tr"><div class="b" style="left:642px;top:1256px;width:598px;height:54px;background:#f5f5f5"></div><div class="b" style="left:1242px;top:1256px;width:598px;height:54px;background:#d1e7ff"></div><div class="b" style="left:1842px;top:1256px;width:198px;height:54px;background:#f5f5f5"></div><span class="t" style="top:1270.00px;font-size:24.2px;letter-spacing:-1.871px;word-spacing:3.37px;left:651.60px;"><span style="color:#333;">I HAVE A DATE ON SUNDAY WITH WILL!!</span></span>
<span class="t" style="top:1269.00px;font-size:25.2px;letter-spacing:-0.318px;left:1251.60px;"><span style="color:#333;">i have a date on sunday with will</span></span>
<span class="t" style="top:1269.00px;font-size:25.2px;right:529.30px;"><span style="color:#333;">0</span></span></div>
<div class="tr"><div class="b" style="left:642px;top:1310px;width:598px;height:54px;background:#fff"></div><div class="b" style="left:1242px;top:1310px;width:598px;height:54px;background:#e7f2ff"></div><div class="b" style="left:1842px;top:1310px;width:198px;height:54px;background:#fff"></div><span class="t" style="top:1323.00px;font-size:25.2px;letter-spacing:-0.731px;word-spacing:1.32px;left:651.60px;"><span style="color:#333;">XXXMobileMovieClub: To use your credit, click the …</span></span>
<span class="t" style="top:1323.00px;font-size:25.2px;letter-spacing:-0.209px;left:1251.60px;"><span style="color:#333;">xxxmobilemovieclub to use your credit click the wa…</span></span>
<span class="t" style="top:1323.00px;font-size:25.2px;right:529.30px;"><span style="color:#333;">1</span></span></div>
<div class="tr"><div class="b" style="left:642px;top:1364px;width:598px;height:54px;background:#f5f5f5"></div><div class="b" style="left:1242px;top:1364px;width:598px;height:54px;background:#d1e7ff"></div><div class="b" style="left:1842px;top:1364px;width:198px;height:54px;background:#f5f5f5"></div><span class="t" style="top:1377.00px;font-size:25.2px;letter-spacing:-0.324px;left:651.60px;"><span style="color:#333;">Oh k...i&#x27;m watching here:)</span></span>
<span class="t" style="top:1377.00px;font-size:25.2px;letter-spacing:-0.381px;left:1251.60px;"><span style="color:#333;">oh k i m watching here</span></span>
<span class="t" style="top:1377.00px;font-size:25.2px;right:529.30px;"><span style="color:#333;">0</span></span></div>
<div class="tr"><div class="b" style="left:642px;top:1418px;width:598px;height:9px;background:#fff"></div><div class="b" style="left:1242px;top:1418px;width:598px;height:9px;background:#e7f2ff"></div><div class="b" style="left:1842px;top:1418px;width:198px;height:9px;background:#fff"></div></div>
<div class="b" style="left:1240px;top:390px;width:2px;height:1037px;background:#ddd"></div>
<div class="b" style="left:1840px;top:390px;width:2px;height:1037px;background:#dcdcdc"></div>
<div class="b" style="left:2040px;top:390px;width:2px;height:1037px;background:#ddd"></div>
<div class="b" style="left:2466px;top:554px;width:9px;height:32px;background:#aaa;border-radius:5px"></div>
<div class="b" style="left:2456px;top:1406px;width:20px;height:21px;background:#ccc"></div>
<svg style="left:0;top:0" width="2560" height="1442" viewBox="0 0 2560 1442">

<g fill="none" stroke="#bbb" stroke-width="3.6"><circle cx="661.6" cy="341.6" r="7.8"/><path d="M667.5 347.5L673.8 353.8" stroke-width="4.2" stroke-linecap="round"/></g>
<g><rect x="649.2" y="409.60" width="3" height="3" fill="#d6d6d6"/><rect x="656.0" y="409.60" width="3" height="3" fill="#d6d6d6"/><rect x="649.2" y="416.30" width="3" height="3" fill="#d6d6d6"/><rect x="656.0" y="416.30" width="3" height="3" fill="#d6d6d6"/><rect x="649.2" y="423.00" width="3" height="3" fill="#d6d6d6"/><rect x="656.0" y="423.00" width="3" height="3" fill="#d6d6d6"/><rect x="649.2" y="429.70" width="3" height="3" fill="#d6d6d6"/><rect x="656.0" y="429.70" width="3" height="3" fill="#d6d6d6"/><rect x="649.2" y="436.40" width="3" height="3" fill="#d6d6d6"/><rect x="656.0" y="436.40" width="3" height="3" fill="#d6d6d6"/></g><g><rect x="1249.2" y="409.60" width="3" height="3" fill="#d6d6d6"/><rect x="1256.0" y="409.60" width="3" height="3" fill="#d6d6d6"/><rect x="1249.2" y="416.30" width="3" height="3" fill="#d6d6d6"/><rect x="1256.0" y="416.30" width="3" height="3" fill="#d6d6d6"/><rect x="1249.2" y="423.00" width="3" height="3" fill="#d6d6d6"/><rect x="1256.0" y="423.00" width="3" height="3" fill="#d6d6d6"/><rect x="1249.2" y="429.70" width="3" height="3" fill="#d6d6d6"/><rect x="1256.0" y="429.70" width="3" height="3" fill="#d6d6d6"/><rect x="1249.2" y="436.40" width="3" height="3" fill="#d6d6d6"/><rect x="1256.0" y="436.40" width="3" height="3" fill="#d6d6d6"/></g><g><rect x="1849.2" y="409.60" width="3" height="3" fill="#d6d6d6"/><rect x="1856.0" y="409.60" width="3" height="3" fill="#d6d6d6"/><rect x="1849.2" y="416.30" width="3" height="3" fill="#d6d6d6"/><rect x="1856.0" y="416.30" width="3" height="3" fill="#d6d6d6"/><rect x="1849.2" y="423.00" width="3" height="3" fill="#d6d6d6"/><rect x="1856.0" y="423.00" width="3" height="3" fill="#d6d6d6"/><rect x="1849.2" y="429.70" width="3" height="3" fill="#d6d6d6"/><rect x="1856.0" y="429.70" width="3" height="3" fill="#d6d6d6"/><rect x="1849.2" y="436.40" width="3" height="3" fill="#d6d6d6"/><rect x="1856.0" y="436.40" width="3" height="3" fill="#d6d6d6"/></g>
</svg>
</main>

<!-- ===================== RIGHT PANEL ===================== -->
<aside>
<div class="b" style="left:2482px;top:82px;width:78px;height:1360px;background:#fff"></div>
<div class="b" style="left:2480px;top:82px;width:2px;height:1360px;background:#ddd"></div>
<div class="b" style="left:2502px;top:209px;width:40px;height:40px;border-radius:20px;background:#a6d1ff"></div>
<div class="b" style="left:2502px;top:305px;width:40px;height:40px;border-radius:20px;background:#a6d1ff"></div>
<div class="b" style="left:2502px;top:401px;width:40px;height:40px;border-radius:20px;background:#a6d1ff"></div>
<svg style="left:0;top:0" width="2560" height="1442" viewBox="0 0 2560 1442">

<path d="M2522.5 118L2511 130.5 2522.5 143M2512.5 130.5H2534" fill="none" stroke="#bbb" stroke-width="6" stroke-linecap="round" stroke-linejoin="round"/>
<path d="M2515 229H2529M2522 222V236" stroke="#fff" stroke-width="5.6" stroke-linecap="round" fill="none"/>
<path d="M2519.4 313.2H2524.8V318H2519.4ZM2517 321.3H2524.8V331.2H2527.2V334.8H2517V331.2H2520.2V324.7H2517Z" fill="#fff"/>
<path d="M2522 411.6C2528 411.6 2532.6 415 2532.6 419.2C2532.6 423.4 2528 426.8 2522 426.8C2520.8 426.8 2519.7 426.7 2518.6 426.4C2517 428.4 2514.8 429.6 2512.6 430C2514 428.6 2514.7 426.9 2514.8 425C2512.6 423.6 2511.4 421.5 2511.4 419.2C2511.4 415 2516 411.6 2522 411.6Z" fill="#fff"/>

</svg>
</aside>

<!-- window edge artefacts (rounded bottom corners) -->
<svg style="left:0;top:0" width="2560" height="1442" viewBox="0 0 2560 1442"><path d="M0 1434.5Q.6 1440 4.4 1442H0Z" fill="#0a0a0a"/><path d="M2560 1434.5Q2559.4 1440 2555.6 1442H2560Z" fill="#0a0a0a"/></svg>
</body>
</html>
